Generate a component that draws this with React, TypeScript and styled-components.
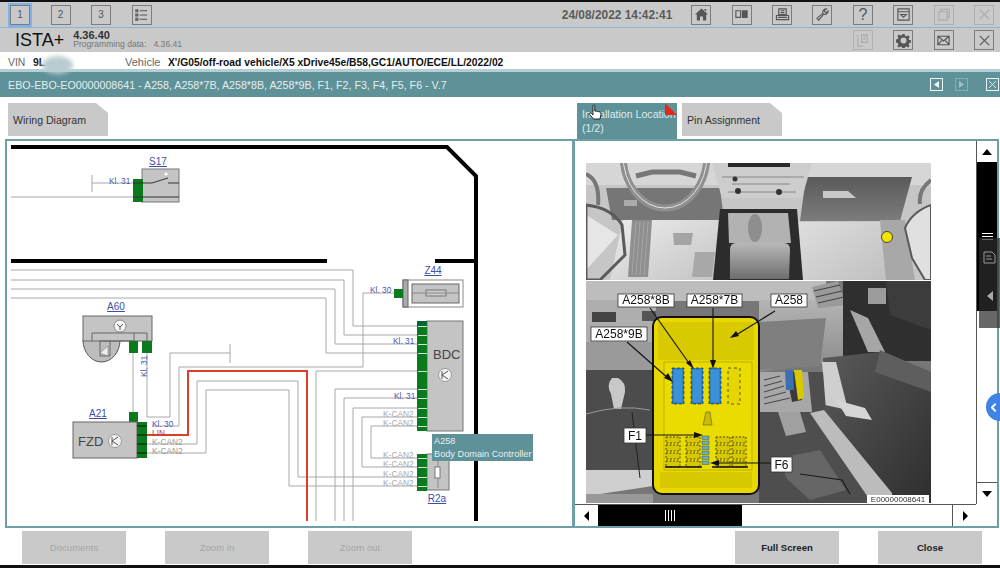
import styled, { createGlobalStyle } from 'styled-components'
import { ChevronLeft } from 'lucide-react'

const GlobalStyle = createGlobalStyle`
  html, body {
    margin: 0;
    padding: 0;
    background: #fff;
    font-family: "Liberation Sans", Arial, sans-serif;
  }
`

const Page = styled.div`
  position: relative;
  display: flex;
  flex-direction: column;
  width: 1000px;
  height: 568px;
  overflow: hidden;
  background: #fff;
  border-top: 2px solid #111;
  border-bottom: 3px solid #111;
  box-sizing: border-box;
`

const TopBar = styled.div`
  display: flex;
  align-items: center;
  justify-content: space-between;
  height: 25px;
  padding: 0 6px 0 8px;
  background: #c9c9c9;
  border-bottom: 1px solid #8db4d6;
  flex-shrink: 0;
`

const ToolGroup = styled.div`
  display: flex;
  align-items: center;
  gap: 20.4px;
`

const ToolButton = styled.div<{ $active?: boolean; $dim?: boolean; $big?: boolean }>`
  display: flex;
  align-items: center;
  justify-content: center;
  width: 20px;
  height: 20px;
  box-sizing: border-box;
  border: 1px solid ${(p) => (p.$dim ? '#b0b0b0' : '#7c7c7c')};
  color: ${(p) => (p.$dim ? '#aaa' : '#555')};
  font-size: ${(p) => (p.$big ? '16px' : '10px')};
  background: #c9c9c9;
  box-shadow: ${(p) => (p.$active ? '0 0 0 2px #7fb2ea' : 'none')};
  margin-left: ${(p) => (p.$active ? '2px' : '0')};
`

const TopLeft = styled(ToolGroup)`
  gap: 20.5px;
`

const TopRight = styled.div`
  display: flex;
  align-items: center;
  gap: 19px;
`

const DateText = styled.span`
  font-size: 11.9px;
  font-weight: bold;
  color: #5a5a5a;
`

const TitleBar = styled.div`
  display: flex;
  align-items: center;
  justify-content: space-between;
  height: 24px;
  padding: 0 6px 0 15px;
  background: #c9c9c9;
  flex-shrink: 0;
`

const Brand = styled.div`
  display: flex;
  align-items: center;
  gap: 9px;
`

const BrandName = styled.span`
  font-size: 18px;
  color: #111;
`

const VersionBox = styled.div`
  display: flex;
  flex-direction: column;
  line-height: 9px;
`

const Version = styled.span`
  font-size: 11px;
  font-weight: bold;
  color: #333;
`

const ProgData = styled.span`
  font-size: 8.6px;
  color: #777;
  white-space: pre;
`

const VinRow = styled.div`
  position: relative;
  display: flex;
  align-items: center;
  height: 17px;
  padding: 3px 0 0 8px;
  box-sizing: border-box;
  font-size: 10.4px;
  flex-shrink: 0;
`

const VinLabel = styled.span`
  color: #666;
  width: 25px;
`

const VinValue = styled.span`
  font-weight: bold;
  color: #222;
  width: 92px;
`

const VehicleLabel = styled.span`
  color: #666;
  font-size: 11px;
  width: 43px;
`

const VehicleValue = styled.span`
  font-weight: bold;
  color: #111;
  font-size: 10.3px;
  white-space: nowrap;
`

const VinBlur = styled.div`
  position: absolute;
  left: 42px;
  top: 4px;
  width: 31px;
  height: 18px;
  border-radius: 50%;
  background: #b9cdd0;
  filter: blur(2px);
`

const HeaderBand = styled.div`
  display: flex;
  align-items: center;
  justify-content: space-between;
  height: 28px;
  box-sizing: border-box;
  padding: 0 1px 0 8px;
  background: #5f9199;
  border-top: 3px solid #b4d0d4;
  color: #e4eeef;
  font-size: 10.7px;
  flex-shrink: 0;
`

const BandIcons = styled.div`
  display: flex;
  align-items: center;
  gap: 12px;
`

const BandButton = styled.div<{ $dim?: boolean; $far?: boolean }>`
  display: flex;
  align-items: center;
  justify-content: center;
  width: 13px;
  height: 13px;
  box-sizing: border-box;
  border: 1px solid ${(p) => (p.$dim ? '#86aeb4' : '#eef5f5')};
  margin-left: ${(p) => (p.$far ? '6px' : '0')};
`

const TabsRow = styled.div`
  display: flex;
  height: 42px;
  padding: 6px 0 0 8px;
  box-sizing: border-box;
  flex-shrink: 0;
`

const TabGroup = styled.div`
  position: relative;
  display: flex;
  gap: 5px;
  margin-left: 469px;
`

const Tab = styled.div<{ $active?: boolean }>`
  display: flex;
  align-items: center;
  width: 100px;
  height: ${(p) => (p.$active ? '36px' : '33px')};
  padding: 0 5px;
  box-sizing: border-box;
  font-size: 10.6px;
  line-height: 14px;
  white-space: nowrap;
  overflow: hidden;
  color: ${(p) => (p.$active ? '#dcebed' : '#333')};
  background: ${(p) => (p.$active ? '#5f9199' : '#c9c9c9')};
  clip-path: ${(p) =>
    p.$active ? 'none' : 'polygon(0 0, 88% 0, 100% 30%, 100% 100%, 0 100%)'};
`

const RedCorner = styled.div`
  position: absolute;
  left: 88px;
  top: 0;
  width: 12px;
  height: 12px;
  background: #e8261c;
  clip-path: polygon(0 0, 100% 100%, 0 100%);
`

const HandCursor = styled.div`
  position: absolute;
  left: 11px;
  top: 1px;
  width: 14px;
  height: 18px;
`

const Panels = styled.div`
  display: flex;
  height: 389px;
  padding-left: 5px;
  flex-shrink: 0;
`

const DiagramPanel = styled.div`
  position: relative;
  width: 569px;
  box-sizing: border-box;
  border: 2px solid #6f9fa6;
  overflow: hidden;
`

const ImagePanel = styled.div`
  display: grid;
  flex: 1;
  grid-template-columns: 1fr 21px;
  grid-template-rows: 1fr 22px;
  box-sizing: border-box;
  border: 2px solid #6f9fa6;
  border-left-width: 1px;
  margin-right: 1px;
`

const ImageArea = styled.div`
  display: flex;
  flex-direction: column;
  padding: 22px 0 0 11px;
  overflow: hidden;
`

const Shot = styled.svg`
  display: block;
  flex-shrink: 0;
  filter: blur(0.5px);
`

const ShotGap = styled.div`
  height: 1px;
  flex-shrink: 0;
`

const VScroll = styled.div`
  display: flex;
  flex-direction: column;
  border-left: 1px solid #555;
  background: #fff;
`

const HScroll = styled.div`
  display: flex;
  align-items: stretch;
  border-top: 1px solid #555;
  background: #fff;
`

const ScrollCorner = styled.div`
  background: #fff;
`

const ScrollEnd = styled.div<{ $bottom?: boolean; $wide?: boolean }>`
  display: flex;
  align-items: center;
  justify-content: center;
  flex-shrink: 0;
  height: ${(p) => (p.$wide ? '100%' : '21px')};
  width: ${(p) => (p.$wide ? '23px' : '100%')};
  margin-top: ${(p) => (p.$bottom ? 'auto' : '0')};
  border-top: ${(p) => (p.$bottom ? '1px solid #555' : 'none')};
`

const VThumb = styled.div`
  display: flex;
  flex-direction: column;
  align-items: center;
  justify-content: center;
  gap: 2px;
  height: 149px;
  background: #000;
`

const HThumb = styled.div`
  display: flex;
  align-items: center;
  justify-content: center;
  gap: 2px;
  width: 144px;
  background: #000;
`

const HSpacer = styled.div`
  flex: 1;
`

const RightEnd = styled(ScrollEnd)`
  border-left: 1px solid #555;
`

const GripH = styled.i`
  display: block;
  width: 11px;
  height: 1px;
  background: #fff;
`

const GripV = styled.i`
  display: block;
  width: 1px;
  height: 11px;
  background: #fff;
`

const ButtonRow = styled.div`
  display: flex;
  align-items: flex-start;
  height: 37px;
  padding: 3px 18px 0 22px;
  box-sizing: border-box;
  gap: 39px;
  flex-shrink: 0;
`

const ActionButton = styled.div<{ $disabled?: boolean; $pushRight?: boolean }>`
  display: flex;
  align-items: center;
  justify-content: center;
  width: 104px;
  height: 33px;
  background: #c9c9c9;
  font-size: 9.6px;
  font-weight: ${(p) => (p.$disabled ? 'normal' : 'bold')};
  color: ${(p) => (p.$disabled ? '#a6a6a6' : '#222')};
  margin-left: ${(p) => (p.$pushRight ? 'auto' : '0')};
`

const Tooltip = styled.div`
  position: absolute;
  left: 425px;
  top: 293px;
  width: 101px;
  height: 27px;
  box-sizing: border-box;
  padding: 1px 2px;
  background: #5f9199;
  color: #e6f0f1;
  font-size: 9.2px;
  line-height: 13px;
  white-space: nowrap;
`

const SidePanel = styled.div`
  position: absolute;
  left: 979px;
  top: 236px;
  width: 21px;
  height: 90px;
  display: flex;
  flex-direction: column;
  align-items: center;
  gap: 26px;
  padding-top: 12px;
  box-sizing: border-box;
  background: rgba(45, 45, 45, 0.72);
  color: #999;
`

const AssistBubble = styled.div`
  position: absolute;
  left: 986px;
  top: 391px;
  width: 28px;
  height: 28px;
  padding-left: 1px;
  box-sizing: border-box;
  display: flex;
  align-items: center;
  border-radius: 50%;
  background: #3f83e4;
  color: #fff;
`

const WireLabel = styled.text<{ $tone?: string }>`
  font-family: "Liberation Sans", Arial, sans-serif;
  font-size: 8.4px;
  fill: ${(p) => p.$tone || '#4a5ab0'};
`

const PartLink = styled.text`
  font-family: "Liberation Sans", Arial, sans-serif;
  font-size: 10px;
  fill: #3c4ea8;
  text-decoration: underline;
  text-anchor: middle;
`

const PartName = styled.text`
  font-family: "Liberation Sans", Arial, sans-serif;
  font-size: 13px;
  fill: #444;
`

const CalloutText = styled.text`
  font-family: "Liberation Sans", Arial, sans-serif;
  font-size: 12px;
  fill: #111;
  text-anchor: middle;
`

const StampText = styled.text`
  font-family: "Liberation Sans", Arial, sans-serif;
  font-size: 8px;
  fill: #333;
  text-anchor: middle;
`

const Icon = ({ d, fill }: { d: string; fill?: boolean }) => (
  <svg width="15" height="15" viewBox="0 0 16 16" fill={fill ? 'currentColor' : 'none'} stroke={fill ? 'none' : 'currentColor'} strokeWidth="1.2">
    <path d={d} />
  </svg>
)

const ICONS = {
  list: 'M2 3h2v2H2zM6 4h8M2 7.5h2v2H2zM6 8.5h8M2 12h2v2H2zM6 13h8',
  home: 'M8 1.5 15 8h-2v6.5H9.6V10H6.4v4.5H3V8H1z M11 2h2v3l-2-2z',
  split: 'M2 4h5v7H2zM9 4h5v7H9zM10 5h3v5h-3zM11 6h1v3h-1z',
  printer: 'M4 2h8v6H4zM1.5 9h13v4.5h-13zM6 4h4M6 6h4M3 11h10',
  wrench: 'M14 4.2a3.6 3.6 0 0 1-4.8 3.4L4 14l-2-2 6.4-5.2A3.6 3.6 0 0 1 12 2L9.8 4.2l2 2z',
  tray: 'M2 2h12v12H2zM2 5h12M5 8h6L8 11z',
  windows: 'M3 5h9v9H3zM5 5V2.5h9v9h-2',
  close: 'M3 3l10 10M13 3 3 13',
  copy: 'M7 2h6v8H7zM9 4.5h2M9 6.5h2M3 5v9h6M1.5 3h2',
  gear: 'M8 4.8a3.2 3.2 0 1 0 0 6.4 3.2 3.2 0 0 0 0-6.4zM6.8 1h2.4l.4 2 1.5.6 1.8-1.1 1.6 1.6-1.1 1.8.6 1.5 2 .4v2.4l-2 .4-.6 1.5 1.1 1.8-1.6 1.6-1.8-1.1-1.5.6-.4 2H6.8l-.4-2-1.5-.6-1.8 1.1-1.6-1.6 1.1-1.8-.6-1.5-2-.4V6.8l2-.4.6-1.5-1.1-1.8 1.6-1.6 1.8 1.1 1.5-.6z',
  mail: 'M2 3.5h12v9H2zM2 3.5l6 5 6-5M2 12.5l4.5-5M14 12.5l-4.5-5',
}

const Green = ({ x, y, w, h }: { x: number; y: number; w: number; h: number }) => (
  <rect x={x} y={y} width={w} height={h} fill="#0b7a1c" />
)

// page coordinates are kept in the viewBox, easier to read off the screenshot
const Diagram = () => {
  const bdcPins = [326, 335, 344, 353, 371, 389, 398, 408, 417, 426]
  const r2aPins = [458, 467, 477, 486]
  return (
    <svg width="565" height="385" viewBox="7 141 565 385">
      <g fill="none" stroke="#000" strokeWidth="4">
        <path d="M11 147H447L476 176V521" />
        <path d="M11 261H327M435 261H476" />
      </g>
      <g fill="none" stroke="#a8a8a8" strokeWidth="1">
        <path d="M11 197H133M92 175V192M92 183H133" />
        <path d="M11 270H353V326H418M11 280H344V335H418M11 289H335V344H418M11 298H326V353H418" />
        <path d="M152 426H179V367H363V293H394" />
        <path d="M133 353V412M147 353V417H170V353H230M230 344V363" />
        <path d="M316 521V371H418M335 521V389H418M344 521V398H418M353 521V408H418" />
        <path d="M418 417H362V467H418M418 426H371V458H418" />
        <path d="M137 444H197V381H298V477H418M137 453H206V390H289V486H418" />
      </g>
      <path d="M137 435H188V371H307V521" fill="none" stroke="#d9402c" strokeWidth="2" />

      {/* S17 */}
      <PartLink x="158" y="165">S17</PartLink>
      <rect x="142" y="169" width="37" height="33" fill="#c4c4c4" stroke="#777" />
      <Green x={133} y={179} w={10} h={23} />
      <path d="M133 183H143M133 197H179M143 183H152L168 178M168 183H179" stroke="#333" strokeWidth="1" fill="none" />
      <circle cx="166" cy="174" r="1.6" fill="#fff" />
      <WireLabel x="109" y="184">Kl. 31</WireLabel>

      {/* A60 */}
      <PartLink x="116" y="310">A60</PartLink>
      <path d="M83 340A18.5 22 0 0 0 120 340Z" fill="#bdbdbd" stroke="#555" />
      <rect x="83" y="316" width="69" height="25" fill="#c4c4c4" stroke="#666" />
      <path d="M92 341V333H147V341M100 341H134V333M100 341V356H110V341" fill="none" stroke="#666" />
      <path d="M100 353L108 346V356Z" fill="#eee" stroke="#777" strokeWidth="0.6" />
      <circle cx="120" cy="326" r="6" fill="#f4f4f4" stroke="#888" />
      <path d="M117 324L120 327L123 324M120 327V330" stroke="#555" fill="none" />
      <Green x={129} y={341} w={9} h={12} />
      <Green x={142} y={341} w={10} h={12} />
      <WireLabel x="0" y="0" transform="translate(147 377) rotate(-90)">Kl. 31</WireLabel>

      {/* FZD */}
      <PartLink x="98" y="417">A21</PartLink>
      <Green x={129} y={412} w={9} h={10} />
      <rect x="73" y="422" width="64" height="36" fill="#c4c4c4" stroke="#666" />
      <Green x={137} y={422} w={10} h={36} />
      <path d="M137 426H147M137 435H147M137 444H147M137 453H147" stroke="#111" />
      <PartName x="78" y="446">FZD</PartName>
      <circle cx="115" cy="441" r="6.5" fill="#f4f4f4" stroke="#999" />
      <path d="M112 441L118 437M112 441L118 445M112 437V445" stroke="#555" fill="none" />
      <WireLabel x="152" y="427">Kl. 30</WireLabel>
      <WireLabel x="152" y="436" $tone="#c8392a">LIN</WireLabel>
      <WireLabel x="152" y="445" $tone="#9a9a9a">K-CAN2</WireLabel>
      <WireLabel x="152" y="454" $tone="#9a9a9a">K-CAN2</WireLabel>

      {/* Z44 */}
      <PartLink x="433" y="274">Z44</PartLink>
      <rect x="403" y="280" width="60" height="27" fill="#fff" stroke="#888" />
      <rect x="403" y="280" width="5" height="27" fill="#aaa" stroke="#666" />
      <rect x="412" y="284" width="47" height="19" fill="#c4c4c4" stroke="#666" />
      <rect x="426" y="290" width="20" height="6" fill="#ccc" stroke="#777" />
      <path d="M412 293H459" stroke="#888" />
      <Green x={394} y={289} w={9} h={9} />
      <WireLabel x="370" y="293">Kl. 30</WireLabel>

      {/* BDC */}
      <rect x="427" y="321" width="36" height="110" fill="#c4c4c4" stroke="#777" />
      <Green x={417} y={321} w={10} h={110} />
      {bdcPins.map((y) => (
        <rect key={y} x="418" y={y} width="9" height="1" fill="#d0e6d2" />
      ))}
      <rect x="417" y="321" width="10" height="5" fill="#063" />
      <PartName x="433" y="359">BDC</PartName>
      <circle cx="445" cy="375" r="6.5" fill="#f4f4f4" stroke="#999" />
      <path d="M442 375L448 371M442 375L448 379M442 371V379" stroke="#555" fill="none" />
      <WireLabel x="393" y="344">Kl. 31</WireLabel>
      <WireLabel x="394" y="399">Kl. 31</WireLabel>
      <WireLabel x="383" y="417" $tone="#a8a8a8">K-CAN2</WireLabel>
      <WireLabel x="383" y="426" $tone="#a8a8a8">K-CAN2</WireLabel>

      {/* R2a */}
      <rect x="427" y="454" width="22" height="36" fill="#c4c4c4" stroke="#777" />
      <Green x={417} y={454} w={10} h={37} />
      {r2aPins.map((y) => (
        <rect key={y} x="418" y={y} width="9" height="1" fill="#d0e6d2" />
      ))}
      <rect x="435" y="467" width="5" height="11" fill="#fff" stroke="#777" />
      <path d="M438 454V467M438 478V488" stroke="#888" />
      <PartLink x="437" y="502">R2a</PartLink>
      {r2aPins.map((y) => (
        <WireLabel key={y} x="383" y={y} $tone="#a8a8a8">K-CAN2</WireLabel>
      ))}
    </svg>
  )
}

const TopPhoto = () => (
  <Shot width="345" height="117" viewBox="586 163 345 117">
    <defs>
      <linearGradient id="arm" x1="0" y1="0" x2="0" y2="1">
        <stop offset="0" stopColor="#b8b8b8" />
        <stop offset="1" stopColor="#6e6e6e" />
      </linearGradient>
      <linearGradient id="floor" x1="0" y1="0" x2="1" y2="1">
        <stop offset="0" stopColor="#ececec" />
        <stop offset="1" stopColor="#c4c4c4" />
      </linearGradient>
      <linearGradient id="floorR" x1="0" y1="0" x2="1" y2="1">
        <stop offset="0" stopColor="#dedede" />
        <stop offset="1" stopColor="#c0c0c0" />
      </linearGradient>
      <linearGradient id="glove" x1="0" y1="0" x2="0" y2="1">
        <stop offset="0" stopColor="#5a5a5a" />
        <stop offset="1" stopColor="#7c7c7c" />
      </linearGradient>
    </defs>
    <rect x="586" y="163" width="345" height="117" fill="#c6c6c6" />
    <rect x="586" y="163" width="345" height="22" fill="#d6d6d6" />
    <path d="M606 188H720L724 220H612Z" fill="#767676" />
    <rect x="624" y="200" width="13" height="6" fill="#aaa" />
    <path d="M806 177H912L900 221H800Z" fill="url(#glove)" />
    <path d="M823 191H848L856 198H823Z" fill="#c8c8c8" />
    <path d="M712 163H812L802 198H722Z" fill="#cdcdcd" />
    <path d="M728 163H790V167H728Z" fill="#2a2a2a" />
    <path d="M722 177H804M728 192H796M732 184H790" stroke="#888" strokeWidth="1" />
    <circle cx="735" cy="179" r="2.5" fill="#333" />
    <circle cx="738" cy="191" r="3" fill="#333" />
    <circle cx="779" cy="192" r="3" fill="#333" />
    <path d="M623 220H718V280H610Z" fill="url(#floor)" />
    <path d="M632 220H652L648 277H628Z" fill="#8f8f8f" />
    <path d="M636 222L632 275M640 222L636 275M644 222L640 275M648 222L644 275" stroke="#b0b0b0" strokeWidth="0.7" />
    <path d="M673 233H693L691 245H674Z" fill="#a4a4a4" />
    <path d="M695 252H715L712 277H692Z" fill="#a8a8a8" />
    <path d="M798 222H880L886 280H803Z" fill="url(#floorR)" />
    <path d="M880 220H905L915 280H886Z" fill="#a8a8a8" />
    <path d="M720 209H797L803 280H713Z" fill="#2c2c2c" />
    <path d="M728 213H788L791 243H729Z" fill="#b2b2b2" />
    <ellipse cx="755" cy="228" rx="7" ry="14" fill="#8e8e8e" />
    <path d="M736 243H784Q790 243 790 250L789 279H730L730 250Q730 243 736 243Z" fill="url(#arm)" />
    <path d="M586 215L618 235L586 270Z" fill="#e6e6e6" />
    <path d="M586 205Q612 208 622 225L625 255L600 280H586Z" fill="none" stroke="#5a5a5a" strokeWidth="3" />
    <path d="M931 205Q912 212 905 228L912 258L925 280H931Z" fill="#e0e0e0" stroke="#5a5a5a" strokeWidth="2" />
    <path d="M586 174Q600 180 598 205" fill="none" stroke="#777" strokeWidth="4" />
    <path d="M931 180Q918 190 920 204" fill="none" stroke="#777" strokeWidth="4" />
    <ellipse cx="665" cy="155" rx="42" ry="53" fill="none" stroke="#8f8f8f" strokeWidth="7" />
    <ellipse cx="665" cy="155" rx="42" ry="53" fill="none" stroke="#e4e4e4" strokeWidth="1" />
    <path d="M636 176L652 172H680L696 176" fill="none" stroke="#777" strokeWidth="5" />
    <circle cx="887" cy="237" r="5.5" fill="#f3e600" stroke="#444" strokeWidth="1" />
  </Shot>
)

const Callout = ({ x, y, w, h, text }: { x: number; y: number; w: number; h: number; text: string }) => (
  <g>
    <rect x={x} y={y} width={w} height={h} fill="#fff" stroke="#333" strokeWidth="0.8" />
    <CalloutText x={x + w / 2} y={y + h - 3}>{text}</CalloutText>
  </g>
)

const Arrow = ({ d, tip }: { d: string; tip: string }) => (
  <g>
    <path d={d} stroke="#111" strokeWidth="1.1" fill="none" />
    <path d={tip} fill="#111" />
  </g>
)

const BottomPhoto = () => {
  const blues = [672, 691, 709]
  const fuseCols = [666, 686, 716, 732]
  const fuseRows = [437, 445, 453, 461]
  const miniFuses = [436, 441, 446, 451, 456, 461]
  return (
    <Shot width="345" height="222" viewBox="586 281 345 222">
      <defs>
        <linearGradient id="door" x1="0" y1="0" x2="1" y2="1">
          <stop offset="0" stopColor="#5a5a5a" />
          <stop offset="1" stopColor="#2e2e2e" />
        </linearGradient>
        <linearGradient id="dash" x1="0" y1="0" x2="0" y2="1">
          <stop offset="0" stopColor="#b4b4b4" />
          <stop offset="1" stopColor="#8a8a8a" />
        </linearGradient>
      </defs>
      <rect x="586" y="281" width="345" height="222" fill="#777" />

      {/* left side: dash and shifter */}
      <rect x="586" y="281" width="240" height="20" fill="#bdbdbd" />
      <rect x="586" y="300" width="70" height="42" fill="#aeaeae" />
      <rect x="592" y="312" width="24" height="10" fill="#444" />
      <rect x="642" y="311" width="14" height="10" fill="#555" />
      <rect x="586" y="342" width="67" height="28" fill="#9a9a9a" />
      <path d="M586 370H653V470H586Z" fill="#4c4c4c" />
      <path d="M586 470H653V486L600 494H586Z" fill="#cfcfcf" />
      <path d="M586 494H653V503H586Z" fill="#999" />
      <path d="M612 378Q606 385 611 394L614 409H621L625 392Q626 382 618 378Z" fill="#c8c8c8" />
      <path d="M586 414Q620 404 650 410" stroke="#999" fill="none" />
      <path d="M632 412L640 478" stroke="#222" fill="none" />

      {/* glove box and vent */}
      <path d="M759 300H843V360L759 372Z" fill="url(#dash)" />
      <path d="M759 322L826 318L820 366L759 370Z" fill="#7f7f7f" />
      <path d="M812 287L838 281L846 305L818 308Z" fill="#9a9a9a" />
      <path d="M814 291L840 285M816 297L842 291M818 303L844 297" stroke="#444" strokeWidth="1.2" />

      {/* door */}
      <rect x="843" y="281" width="88" height="80" fill="#2f2f2f" />
      <path d="M850 310L868 318L885 352L868 352Z" fill="#a6a6a6" />
      <path d="M868 288H886V304H868Z" fill="#9c9c9c" />
      <path d="M886 281H931V330L890 315Z" fill="#3c3c3c" />
      <path d="M823 358L880 352L931 385V503H885L826 410Z" fill="url(#door)" />
      <path d="M880 350L931 372V392L875 372Z" fill="#5e5e5e" />
      <path d="M822 362L836 362L848 410L825 405Z" fill="#cfcfcf" />
      <path d="M836 400L865 408L872 420L846 416Z" fill="#d6d6d6" />

      {/* cables behind the box */}
      <path d="M759 372H823L826 410L880 493V503H759Z" fill="#4e4e4e" />
      <path d="M760 372H808L812 412H760Z" fill="#a8a8a8" />
      <path d="M764 380L780 376M764 386L782 381M764 392L784 386M764 398L786 392M764 404L790 398" stroke="#444" strokeWidth="1" />
      <path d="M786 372L796 372L802 400L792 402Z" fill="#3a3a3a" />
      <path d="M794 370L802 370L804 398L798 400Z" fill="#d8c800" />
      <path d="M785 370L793 370L794 390L786 390Z" fill="#3a70b0" />
      <path d="M778 412L800 412L806 432L786 436Z" fill="#a0a0a0" />
      <path d="M810 413L824 410L892 493V503H872Z" fill="#bcbcbc" />
      <path d="M780 458L820 450L846 490L810 500L786 478Z" fill="#666" />
      <path d="M800 474L842 480L850 494" stroke="#1a1a1a" fill="none" strokeWidth="1.2" />

      {/* yellow fuse box */}
      <rect x="653" y="317" width="106" height="177" rx="9" fill="#e8d800" stroke="#111" strokeWidth="2" />
      <path d="M658 325Q658 322 662 322H750Q754 322 754 325V360H658Z" fill="#d9c900" />
      <path d="M664 362H752V470H664Z" fill="#ebdc00" stroke="#bcae00" strokeWidth="1" />
      <rect x="660" y="472" width="92" height="16" fill="#d8c800" />

      {blues.map((x) => (
        <g key={x}>
          <rect x={x} y={368} width={12} height={36} fill="#2f82c4" stroke="#111" strokeWidth="0.6" strokeDasharray="3 2" />
          <rect x={x + 2} y={370} width={8} height={32} fill="#3b92d8" />
        </g>
      ))}
      <rect x="728" y="368" width="12" height="36" fill="#e6d600" stroke="#333" strokeWidth="0.8" strokeDasharray="3 3" />
      <path d="M706 412H710L712 425H703Z" fill="#cabb00" stroke="#555" strokeWidth="0.6" />
      {fuseCols.map((x) =>
        fuseRows.map((y) => (
          <rect key={`${x}-${y}`} x={x} y={y} width={14} height={6} fill="#d8c800" stroke="#222" strokeWidth="0.8" strokeDasharray="2 1.5" />
        )),
      )}
      <path d="M665 467H702M712 467H748" stroke="#111" strokeWidth="1.5" />
      {miniFuses.map((y) => (
        <rect key={y} x="702" y={y} width="7" height="3.4" fill="#68b0b8" stroke="#333" strokeWidth="0.4" />
      ))}

      <Arrow d="M650 308L691 366" tip="M694 369L686 363L690 360Z" />
      <Arrow d="M713 308V364" tip="M713 369L710 360H716Z" />
      <Arrow d="M775 311L736 335" tip="M730 338L736 331L739 336Z" />
      <Arrow d="M627 342L669 379" tip="M673 382L664 378L668 373Z" />
      <Arrow d="M646 435H697" tip="M703 435L694 432V438Z" />
      <Arrow d="M771 463H716" tip="M710 463L719 460V466Z" />

      <Callout x={618} y={294} w={56} h={13} text="A258*8B" />
      <Callout x={687} y={294} w={55} h={13} text="A258*7B" />
      <Callout x={771} y={294} w={36} h={13} text="A258" />
      <Callout x={591} y={327} w={56} h={14} text="A258*9B" />
      <Callout x={624} y={428} w={22} h={15} text="F1" />
      <Callout x={771} y={457} w={21} h={15} text="F6" />
      <rect x="867" y="495" width="62" height="9" fill="#fff" />
      <StampText x="898" y="502">E00000008641</StampText>
    </Shot>
  )
}

const Tri = ({ dir }: { dir: 'up' | 'down' | 'left' | 'right' }) => {
  const paths = {
    up: 'M1 9L6 3L11 9Z',
    down: 'M1 3L6 9L11 3Z',
    left: 'M8 1L3 6L8 11Z',
    right: 'M4 1L9 6L4 11Z',
  }
  return (
    <svg width="12" height="12" viewBox="0 0 12 12">
      <path d={paths[dir]} fill="#000" />
    </svg>
  )
}

export default function App() {
  return (
    <Page>
      <GlobalStyle />
      <TopBar>
        <TopLeft>
          <ToolButton $active>1</ToolButton>
          <ToolButton>2</ToolButton>
          <ToolButton>3</ToolButton>
          <ToolButton><Icon d={ICONS.list} /></ToolButton>
        </TopLeft>
        <TopRight>
          <DateText>24/08/2022 14:42:41</DateText>
          <ToolGroup>
            <ToolButton><Icon d={ICONS.home} fill /></ToolButton>
            <ToolButton><Icon d={ICONS.split} /></ToolButton>
            <ToolButton><Icon d={ICONS.printer} /></ToolButton>
            <ToolButton><Icon d={ICONS.wrench} /></ToolButton>
            <ToolButton $big>?</ToolButton>
            <ToolButton><Icon d={ICONS.tray} /></ToolButton>
            <ToolButton $dim><Icon d={ICONS.windows} /></ToolButton>
            <ToolButton $dim><Icon d={ICONS.close} /></ToolButton>
          </ToolGroup>
        </TopRight>
      </TopBar>
      <TitleBar>
        <Brand>
          <BrandName>ISTA+</BrandName>
          <VersionBox>
            <Version>4.36.40</Version>
            <ProgData>Programming data:   4.36.41</ProgData>
          </VersionBox>
        </Brand>
        <ToolGroup>
          <ToolButton $dim><Icon d={ICONS.copy} /></ToolButton>
          <ToolButton><Icon d={ICONS.gear} fill /></ToolButton>
          <ToolButton><Icon d={ICONS.mail} /></ToolButton>
          <ToolButton><Icon d={ICONS.close} /></ToolButton>
        </ToolGroup>
      </TitleBar>
      <VinRow>
        <VinLabel>VIN</VinLabel>
        <VinValue>9L</VinValue>
        <VehicleLabel>Vehicle</VehicleLabel>
        <VehicleValue>X'/G05/off-road vehicle/X5 xDrive45e/B58,GC1/AUTO/ECE/LL/2022/02</VehicleValue>
        <VinBlur />
      </VinRow>
      <HeaderBand>
        <span>EBO-EBO-EO0000008641 - A258, A258*7B, A258*8B, A258*9B, F1, F2, F3, F4, F5, F6 - V.7</span>
        <BandIcons>
          <BandButton>
            <svg width="9" height="9" viewBox="0 0 9 9"><path d="M7 1L2 4.5L7 8Z" fill="#eef5f5" /></svg>
          </BandButton>
          <BandButton $dim>
            <svg width="9" height="9" viewBox="0 0 9 9"><path d="M2 1L7 4.5L2 8Z" fill="#9cc0c5" /></svg>
          </BandButton>
          <BandButton $far>
            <svg width="9" height="9" viewBox="0 0 9 9"><path d="M1 1L8 8M8 1L1 8" stroke="#dcebed" /></svg>
          </BandButton>
        </BandIcons>
      </HeaderBand>
      <TabsRow>
        <Tab>Wiring Diagram</Tab>
        <TabGroup>
          <Tab $active>
            <span>Installation Location<br />(1/2)</span>
          </Tab>
          <Tab>Pin Assignment</Tab>
          <RedCorner />
          <HandCursor>
            <svg width="14" height="18" viewBox="0 0 14 18">
              <path d="M5 1.5C5 .6 6.8 .6 6.8 1.5V7L8.6 7.2 10.6 7.6 12.4 8.2C13 8.6 13 10 12.8 11L12 15H5.4L1.6 10.4C1 9.4 2.4 8.4 3.2 9.2L5 11Z" fill="#fff" stroke="#111" strokeWidth="0.9" />
            </svg>
          </HandCursor>
        </TabGroup>
      </TabsRow>
      <Panels>
        <DiagramPanel>
          <Diagram />
          <Tooltip>
            A258<br />Body Domain Controller
          </Tooltip>
        </DiagramPanel>
        <ImagePanel>
          <ImageArea>
            <TopPhoto />
            <ShotGap />
            <BottomPhoto />
          </ImageArea>
          <VScroll>
            <ScrollEnd><Tri dir="up" /></ScrollEnd>
            <VThumb>
              <GripH /><GripH /><GripH />
            </VThumb>
            <ScrollEnd $bottom><Tri dir="down" /></ScrollEnd>
          </VScroll>
          <HScroll>
            <ScrollEnd $wide><Tri dir="left" /></ScrollEnd>
            <HThumb>
              <GripV /><GripV /><GripV /><GripV />
            </HThumb>
            <HSpacer />
            <RightEnd $wide><Tri dir="right" /></RightEnd>
          </HScroll>
          <ScrollCorner />
        </ImagePanel>
      </Panels>
      <ButtonRow>
        <ActionButton $disabled>Documents</ActionButton>
        <ActionButton $disabled>Zoom in</ActionButton>
        <ActionButton $disabled>Zoom out</ActionButton>
        <ActionButton $pushRight>Full Screen</ActionButton>
        <ActionButton>Close</ActionButton>
      </ButtonRow>
      <SidePanel>
        <svg width="13" height="14" viewBox="0 0 13 14" fill="none" stroke="currentColor">
          <path d="M1 2H9L12 5V13H1ZM3 6H8M3 9H9" />
        </svg>
        <svg width="8" height="12" viewBox="0 0 8 12"><path d="M7 1L1 6L7 11Z" fill="#aaa" /></svg>
      </SidePanel>
      <AssistBubble><ChevronLeft size={13} strokeWidth={3.5} /></AssistBubble>
    </Page>
  )
}
